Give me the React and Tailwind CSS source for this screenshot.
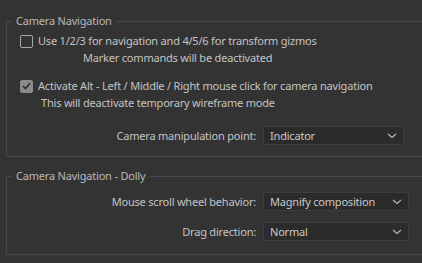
import React from "react";

function Chevron() {
  return (
    <svg width="10" height="6" viewBox="0 0 10 6" className="shrink-0">
      <path d="M1 1 L5 4.5 L9 1" fill="none" stroke="#b8b8b8" strokeWidth="1.1" />
    </svg>
  );
}

function Select({ value, width }) {
  return (
    <div
      className={`flex h-[19px] items-center justify-between rounded-[2px] border border-[#3e3e3e] bg-[#2b2b2b] pl-[6px] pr-[6px] text-[#c9c9c9] ${width}`}
    >
      <span>{value}</span>
      <Chevron />
    </div>
  );
}

function Check({ checked }) {
  return (
    <div
      className={`flex h-[13px] w-[13px] shrink-0 items-center justify-center rounded-[2px] border ${
        checked ? "border-[#8a8a8a] bg-[#8a8a8a]" : "border-[#a8a8a8] bg-transparent"
      }`}
    >
      {checked && (
        <svg width="9" height="8" viewBox="0 0 9 8">
          <path d="M1 4 L3.5 6.5 L8 1.2" fill="none" stroke="#2e2e2e" strokeWidth="1.6" />
        </svg>
      )}
    </div>
  );
}

export default function App() {
  return (
    <div
      className="h-[263px] w-[422px] overflow-hidden bg-[#333333] pl-[6px] pt-[14px] text-[11px] leading-[16px] tracking-[-0.2px] text-[#c4c4c4]"
      style={{ fontFamily: '"Noto Sans", "Open Sans", sans-serif' }}
    >
      <fieldset className="-mr-[20px] h-[143px] border border-[#474747] px-0">
        <legend className="ml-[5px] px-[4px] leading-[14px] text-[#b9b9b9]">Camera Navigation</legend>
        <div className="mt-[5px] flex items-center gap-[5px] pl-[13px]">
          <Check />
          <span>Use 1/2/3 for navigation and 4/5/6 for transform gizmos</span>
        </div>
        <div className="mt-[1px] pl-[76px]">Marker commands will be deactivated</div>
        <div className="mt-[12px] flex items-center gap-[5px] pl-[13px]">
          <Check checked />
          <span>Activate Alt - Left / Middle / Right mouse click for camera navigation</span>
        </div>
        <div className="mt-[1px] pl-[34px]">This will deactivate temporary wireframe mode</div>
        <div className="mt-[15px] flex items-center">
          <div className="w-[249px] text-right">Camera manipulation point:</div>
          <div className="ml-[7px]">
            <Select value="Indicator" width="w-[141px]" />
          </div>
        </div>
      </fieldset>
      <fieldset className="-mr-[20px] mt-[12px] h-[86px] border border-[#474747] px-0">
        <legend className="ml-[5px] px-[4px] leading-[14px] text-[#b9b9b9]">Camera Navigation - Dolly</legend>
        <div className="mt-[9px] flex items-center">
          <div className="w-[249px] text-right">Mouse scroll wheel behavior:</div>
          <div className="ml-[7px]">
            <Select value="Magnify composition" width="w-[146px]" />
          </div>
        </div>
        <div className="mt-[11px] flex items-center">
          <div className="w-[249px] text-right">Drag direction:</div>
          <div className="ml-[7px]">
            <Select value="Normal" width="w-[146px]" />
          </div>
        </div>
      </fieldset>
    </div>
  );
}
